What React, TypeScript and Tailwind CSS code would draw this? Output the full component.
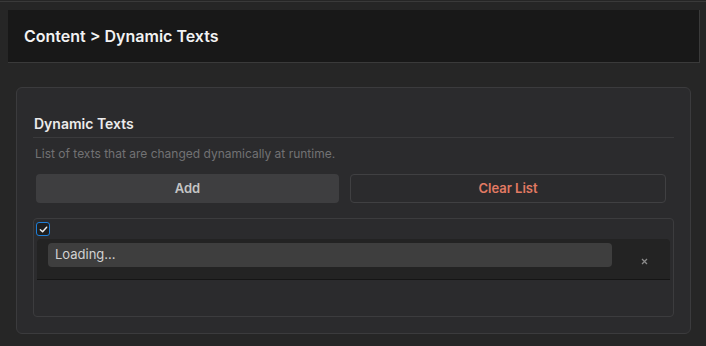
import React, { useState } from 'react';

const App = () => {
  const [checked, setChecked] = useState(true);
  const [items] = useState<string[]>(["Loading..."]);

  return (
    <div className="w-[706px] h-[346px] bg-[#262626] overflow-hidden font-['Inter',sans-serif]">
      <div className="h-[2px] border-b border-[#3a3a3a]" />
      <div className="ml-2 mr-[6px] mt-2 h-[53px] bg-[#181818] border-b border-r border-[#3a3a3a] flex items-center px-4">
        <h1 className="text-[16px] font-semibold text-[#f2f2f2] -mt-px">Content &gt; Dynamic Texts</h1>
      </div>

      <div className="ml-4 mt-[24px] w-[675px] h-[247px] bg-[#2b2b2d] border border-[#3b3b3d] rounded-md px-4 pt-[26px]">
        <h2 className="text-[14px] font-semibold text-[#ececec] leading-5 pl-px">Dynamic Texts</h2>
        <div className="mt-[3px] h-px bg-[#3a3a3c]" />
        <p className="mt-[8px] text-[12px] text-[#727274] leading-4 pl-[2px]">List of texts that are changed dynamically at runtime.</p>

        <div className="mt-[12px] flex gap-[11px] pl-[3px]">
          <button className="w-[303px] h-[29px] rounded bg-[#3e3e40] text-[13px] font-semibold text-[#c4c4c4]">Add</button>
          <button className="w-[316px] h-[29px] rounded border border-[#404042] text-[13px] font-semibold text-[#e27a63]">Clear List</button>
        </div>

        <div className="mt-[15px] h-[99px] border border-[#3c3c3e] rounded pt-[3px] pl-[2px] pr-[3px]">
          <button
            onClick={() => setChecked(!checked)}
            className="w-[14px] h-[14px] rounded-[3px] border border-[#1e7fd9] bg-[#1f1f1f] flex items-center justify-center"
          >
            {checked && (
              <svg width="9" height="9" viewBox="0 0 10 10" fill="none">
                <path d="M1.5 5.3L4 7.6L8.5 2.4" stroke="#f0f0f0" strokeWidth="1.6" strokeLinecap="round" strokeLinejoin="round" />
              </svg>
            )}
          </button>
          {items.map((t, i) => (
            <div key={i} className="mt-[3px] ml-px h-[41px] bg-[#232323] border-b border-[#151515] rounded-t-sm flex items-start pt-1 pl-[11px]">
              <div className="w-[564px] h-[24px] bg-[#3e3e3e] rounded flex items-center px-[7px] text-[13px] text-[#d2d2d2]">{t}</div>
              <div className="flex-1 self-center flex justify-center pl-[6px] pt-px">
                <svg width="7" height="7" viewBox="0 0 7 7">
                  <path d="M1 1L6 6M6 1L1 6" stroke="#8a8a8a" strokeWidth="1.3" />
                </svg>
              </div>
            </div>
          ))}
        </div>
      </div>
    </div>
  );
};

export default App;
